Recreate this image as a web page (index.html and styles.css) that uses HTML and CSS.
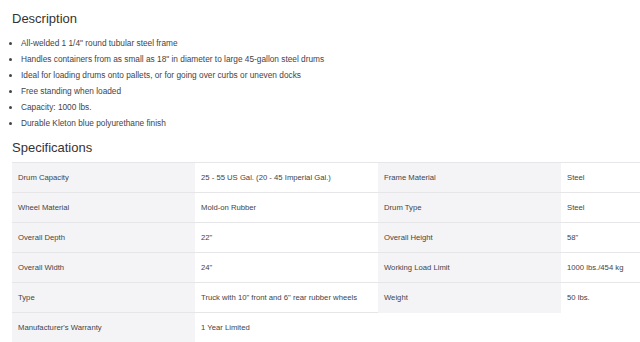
FILE: index.html
```html
<!DOCTYPE html>
<html>
<head>
<meta charset="utf-8">
<link rel="stylesheet" href="styles.css">
</head>
<body>
<div class="page">
  <h2 class="heading heading-desc">Description</h2>
  <ul class="features">
    <li>All-welded 1 1/4" round tubular steel frame</li>
    <li>Handles containers from as small as 18" in diameter to large 45-gallon steel drums</li>
    <li>Ideal for loading drums onto pallets, or for going over curbs or uneven docks</li>
    <li>Free standing when loaded</li>
    <li>Capacity: 1000 lbs.</li>
    <li>Durable Kleton blue polyurethane finish</li>
  </ul>
  <h2 class="heading heading-spec">Specifications</h2>
  <div class="specs">
    <table class="spec-table">
      <colgroup><col class="c"><col class="c"><col class="c"><col class="c"></colgroup>
      <tr><td class="label">Drum Capacity</td><td>25 - 55 US Gal. (20 - 45 Imperial Gal.)</td><td class="label">Frame Material</td><td>Steel</td></tr>
      <tr><td class="label">Wheel Material</td><td>Mold-on Rubber</td><td class="label">Drum Type</td><td>Steel</td></tr>
      <tr><td class="label">Overall Depth</td><td>22"</td><td class="label">Overall Height</td><td>58"</td></tr>
      <tr><td class="label">Overall Width</td><td>24"</td><td class="label">Working Load Limit</td><td>1000 lbs./454 kg</td></tr>
      <tr><td class="label">Type</td><td>Truck with 10" front and 6" rear rubber wheels</td><td class="label">Weight</td><td>50 lbs.</td></tr>
      <tr><td class="label">Manufacturer's Warranty</td><td>1 Year Limited</td></tr>
    </table>
  </div>
</div>
</body>
</html>
```
FILE: styles.css
```css
html, body {
  margin: 0;
  padding: 0;
  background: #fff;
  overflow: hidden;
}
body {
  font-family: "Liberation Sans", Arial, sans-serif;
  color: #333;
}
.page {
  padding: 11px 0 0 12px;
}
.heading {
  margin: 0;
  font-size: 13px;
  line-height: 15px;
  font-weight: normal;
  color: #333;
}
.features {
  margin: 9px 0 9px 0;
  padding: 0 0 0 9px;
  font-size: 8.3px;
  line-height: 16px;
  color: #444;
}
.specs {
  margin-top: 7px;
  overflow: hidden;
}
.spec-table {
  border-collapse: collapse;
  table-layout: fixed;
  width: 731px;
  font-size: 7.7px;
  color: #444;
}
.spec-table .c {
  width: 183px;
}
.spec-table td {
  height: 29px;
  padding: 0 6px;
  border-top: 1px solid #e6e6e8;
  vertical-align: middle;
  white-space: nowrap;
  overflow: hidden;
}
.spec-table td.label {
  background: #f4f4f6;
}
```
